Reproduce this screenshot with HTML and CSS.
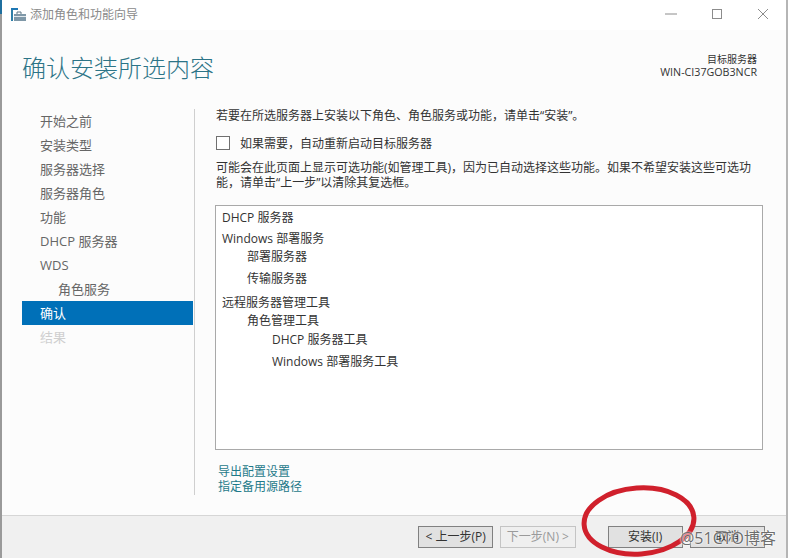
FILE: index.html
```html
<!DOCTYPE html>
<html lang="zh-CN">
  <head>
    <meta charset="UTF-8" />
    <title>添加角色和功能向导</title>
    <link rel="stylesheet" href="styles.css">
  </head>
  <body>
    <div class="window">
      <div class="title-bar">
        <svg class="app-icon" viewBox="0 0 15 15">
          <rect x="0" y="0" width="7" height="2" fill="#1f78b4"></rect>
          <rect x="0" y="2" width="2" height="11" fill="#2f7fa8"></rect>
          <path d="M6 6V4h4v2" fill="none" stroke="#5f7686" stroke-width="1"></path>
          <rect x="3" y="6" width="12" height="7" fill="#7f98a8"></rect>
          <rect x="3" y="8" width="12" height="1" fill="#dfe7ec"></rect>
        </svg>
        <span class="title-text">添加角色和功能向导</span>
        <div class="window-controls">
          <svg class="control-icon" viewBox="0 0 12 12"><line x1="0" y1="6" x2="12" y2="6"></line></svg>
          <svg class="control-icon" viewBox="0 0 12 12"><rect x="1.5" y="1.5" width="9" height="9"></rect></svg>
          <svg class="control-icon" viewBox="0 0 12 12"><line x1="1" y1="1" x2="11" y2="11"></line><line x1="11" y1="1" x2="1" y2="11"></line></svg>
        </div>
      </div>

      <div class="content">
        <div class="header">
          <h1 class="page-title">确认安装所选内容</h1>
          <div class="server-info">
            <div class="server-label">目标服务器</div>
            <div class="server-name">WIN-CI37GOB3NCR</div>
          </div>
        </div>

        <div class="body-row">
          <ul class="steps">
            <li>开始之前</li>
            <li>安装类型</li>
            <li>服务器选择</li>
            <li>服务器角色</li>
            <li>功能</li>
            <li>DHCP 服务器</li>
            <li>WDS</li>
            <li class="sub-step">角色服务</li>
            <li class="active">确认</li>
            <li class="disabled">结果</li>
          </ul>

          <div class="main">
            <p class="intro">若要在所选服务器上安装以下角色、角色服务或功能，请单击“安装”。</p>
            <label class="restart-option">
              <span class="checkbox"></span>
              <span>如果需要，自动重新启动目标服务器</span>
            </label>
            <p class="note">可能会在此页面上显示可选功能(如管理工具)，因为已自动选择这些功能。如果不希望安装这些可选功能，请单击“上一步”以清除其复选框。</p>

            <div class="summary">
              <div class="row-a">DHCP 服务器</div>
              <div class="row-b">Windows 部署服务</div>
              <div class="row-c indent-1">部署服务器</div>
              <div class="row-d indent-1">传输服务器</div>
              <div class="row-e">远程服务器管理工具</div>
              <div class="row-f indent-1">角色管理工具</div>
              <div class="row-g indent-2">DHCP 服务器工具</div>
              <div class="row-h indent-2">Windows 部署服务工具</div>
            </div>

            <div class="links">
              <a>导出配置设置</a>
              <a>指定备用源路径</a>
            </div>
          </div>
        </div>
      </div>

      <div class="footer">
        <button class="btn">&lt; 上一步(P)</button>
        <button class="btn btn-disabled">下一步(N) &gt;</button>
        <button class="btn btn-install">安装(I)</button>
        <button class="btn">取消</button>
      </div>

      <div class="corner-mark"></div>
      <svg class="red-circle" viewBox="0 0 788 558">
        <ellipse cx="639" cy="521" rx="55" ry="33" transform="rotate(-4 639 521)"></ellipse>
      </svg>
      <div class="watermark">@51CTO博客</div>
    </div>
  </body>
</html>
```

FILE: styles.css
```css
* {
  box-sizing: border-box;
}

body {
  margin: 0;
  font-family: "Open Sans", "Noto Sans CJK SC", sans-serif;
  color: #333;
  background: #fff;
}

.window {
  width: 788px;
  height: 558px;
  position: relative;
  display: flex;
  flex-direction: column;
  border-left: 2px solid #9a9a9a;
  border-right: 2px solid #b5b5b5;
}

.title-bar {
  height: 30px;
  display: flex;
  align-items: center;
  background: #fff;
  padding-left: 9px;
}

.app-icon {
  width: 15px;
  height: 15px;
  margin-right: 4px;
}

.title-text {
  font-size: 12px;
  color: #8a8a8a;
  padding-bottom: 2px;
}

.window-controls {
  margin-left: auto;
  margin-right: 17px;
  padding-bottom: 2px;
  display: flex;
  gap: 34px;
}

.control-icon {
  width: 12px;
  height: 12px;
  fill: none;
  stroke: #8c8c8c;
  stroke-width: 1;
}

.content {
  flex: 1;
  display: flex;
  flex-direction: column;
  background: #fcfcfc;
  border-bottom: 1px solid #d6d6d6;
}

.header {
  height: 79px;
  padding: 21px 29px 0 20px;
  display: flex;
  justify-content: space-between;
}

.page-title {
  margin: 0;
  font-size: 24px;
  font-weight: 300;
  line-height: 34px;
  color: #2c7487;
}

.server-info {
  padding-top: 2px;
  text-align: right;
  font-size: 10px;
  line-height: 13px;
}

.server-name {
  font-size: 10.7px;
}

.body-row {
  display: flex;
  height: 386px;
}

.steps {
  list-style: none;
  margin: 0 0 0 20px;
  padding: 0;
  width: 173px;
  height: 386px;
  border-right: 1px solid #cfcfcf;
}

.steps li {
  height: 24px;
  line-height: 24px;
  padding-left: 18px;
  font-size: 13px;
  color: #666;
  margin-right: 1px;
}

.steps .sub-step {
  padding-left: 36px;
}

.steps .active {
  background: #0070b8;
  color: #fff;
}

.steps .disabled {
  color: #cfcfcf;
}

.main {
  width: 548px;
  margin-left: 20px;
}

.intro,
.note {
  margin: 0 0 0 1px;
  font-size: 12px;
  line-height: 15px;
}

.intro {
  line-height: 14px;
}

.restart-option {
  display: flex;
  align-items: center;
  margin: 12px 0 9px 1px;
  font-size: 12px;
  height: 16px;
}

.checkbox {
  width: 14px;
  height: 14px;
  border: 1px solid #707070;
  background: #fff;
  margin-right: 10px;
}

.note {
  width: 540px;
}

.summary {
  height: 245px;
  margin-top: 15px;
  padding-top: 3px;
  background: #fff;
  border: 1px solid #a9a9a9;
  font-size: 12px;
}

.summary div {
  padding-left: 6px;
  line-height: 18px;
}

.summary .indent-1 {
  padding-left: 31px;
}

.summary .indent-2 {
  padding-left: 56px;
}

.summary .row-b {
  margin-top: 3px;
}

.summary .row-d {
  margin-top: 4px;
}

.summary .row-e {
  margin-top: 6px;
}

.summary .row-g {
  margin-top: 1px;
}

.summary .row-h {
  margin-top: 4px;
}

.links {
  margin: 14px 0 0 3px;
  display: flex;
  flex-direction: column;
  font-size: 12px;
  line-height: 15px;
  color: #1f7a8a;
}

.footer {
  height: 42px;
  background: #f0f0f0;
  padding: 10px 21px 0 416px;
  display: flex;
  align-items: flex-start;
  gap: 7px;
}

.btn {
  width: 76px;
  height: 22px;
  padding: 0;
  font-family: "Open Sans", "Noto Sans CJK SC", sans-serif;
  font-size: 12px;
  line-height: 20px;
  color: #333;
  background: #e1e1e1;
  border: 1px solid #808080;
}

.btn-disabled {
  color: #9a9a9a;
  background: #efefef;
  border-color: #c4c4c4;
}

.btn-install {
  margin-left: 25px;
}

.corner-mark {
  position: absolute;
  left: -2px;
  top: 0;
  width: 2px;
  height: 14px;
  background: #1f6f9f;
}

.red-circle {
  position: absolute;
  left: -2px;
  top: 0;
  width: 788px;
  height: 558px;
  fill: none;
  stroke: #d0202c;
  stroke-width: 5;
}

.watermark {
  position: absolute;
  left: 678px;
  top: 527px;
  font-size: 16px;
  line-height: 22px;
  color: rgba(90, 90, 90, 0.9);
  text-shadow: 0 0 2px #fff, 0 0 2px #fff;
}
```
